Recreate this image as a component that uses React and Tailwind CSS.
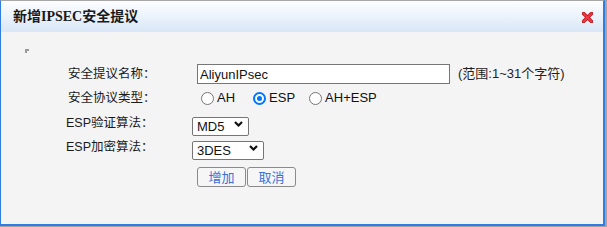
import { useState } from "react";

const sans = { fontFamily: '"Liberation Sans", "Noto Sans CJK SC", sans-serif' };

function Radio({ label, checked, onClick, className }) {
  return (
    <label className={"flex items-center cursor-pointer " + className} onClick={onClick}>
      {checked ? (
        <span className="w-[13px] h-[13px] rounded-full border-2 border-[#0075ff] bg-white flex items-center justify-center">
          <span className="w-[5px] h-[5px] rounded-full bg-[#0075ff]" />
        </span>
      ) : (
        <span className="w-[13px] h-[13px] rounded-full border border-[#767676] bg-white" />
      )}
      <span className="ml-[3px] text-[13px] text-[#111]">{label}</span>
    </label>
  );
}

function Select({ value, options, width }) {
  return (
    <div className={"relative h-[19px] " + width}>
      <select
        defaultValue={value}
        className="appearance-none w-full h-full border border-[#767676] rounded-[2px] bg-white pl-[4px] text-[13px] leading-[17px] text-[#111] outline-none"
      >
        {options.map((o) => (
          <option key={o}>{o}</option>
        ))}
      </select>
      <svg
        className="absolute right-[6px] top-[7px] pointer-events-none"
        width="9"
        height="6"
        viewBox="0 0 9 6"
      >
        <path d="M1 1 L4.5 4.5 L8 1" fill="none" stroke="#111" strokeWidth="2.2" />
      </svg>
    </div>
  );
}

export default function App() {
  const [proto, setProto] = useState("ESP");
  const [name, setName] = useState("AliyunIPsec");

  return (
    <div className="w-[607px] h-[227px] bg-[#a3a3a3] overflow-hidden" style={sans}>
      <div className="w-[605px] h-[226px] flex flex-col border-t border-t-[#a8a8a8] border-l border-r-2 border-b-2 border-[#2f7de3]">
        {/* title bar */}
        <div className="h-[31px] shrink-0 flex items-center justify-between bg-gradient-to-b from-[#fdfeff] to-[#d9e7f7] pl-[12px] pr-[10px]">
          <span
            className="text-[14px] font-bold text-[#1a1a1a]"
            style={{ fontFamily: '"Liberation Serif", "Noto Sans CJK SC", serif' }}
          >
            新增IPSEC安全提议
          </span>
          <svg width="11" height="11" viewBox="0 0 11 11" className="mt-[2px]">
            <path d="M1.5 1.5 L9.5 9.5 M9.5 1.5 L1.5 9.5" stroke="#b3121c" strokeWidth="3.6" strokeLinecap="round" />
            <path d="M1.5 1.5 L9.5 9.5 M9.5 1.5 L1.5 9.5" stroke="#ee3a42" strokeWidth="2" strokeLinecap="round" />
          </svg>
        </div>

        {/* body */}
        <div className="flex-1 bg-[#f4f4f4] flex flex-col">
          <div className="ml-[24px] mt-[17px] w-[4px] h-[4px] border-l-2 border-t-2 border-[#9a9a9a]" />

          <div className="mt-[10px] h-[22px] flex items-center">
            <span className="ml-[67px] w-[129px] text-[12.5px] text-[#1a1a1a]">安全提议名称：</span>
            <input
              value={name}
              onChange={(e) => setName(e.target.value)}
              className="w-[253px] h-[20px] border border-[#767676] bg-white px-[2px] text-[13px] text-[#111] outline-none"
            />
            <span className="ml-[8px] text-[13px] text-[#222]">(范围:1~31个字符)</span>
          </div>

          <div className="h-[26px] flex items-center">
            <span className="ml-[67px] w-[133px] text-[12.5px] text-[#1a1a1a]">安全协议类型：</span>
            <Radio label="AH" checked={proto === "AH"} onClick={() => setProto("AH")} />
            <Radio label="ESP" checked={proto === "ESP"} onClick={() => setProto("ESP")} className="ml-[18px]" />
            <Radio label="AH+ESP" checked={proto === "AH+ESP"} onClick={() => setProto("AH+ESP")} className="ml-[14px]" />
          </div>

          <div className="h-[25px] flex items-center">
            <span className="ml-[65px] w-[126px] text-[12.5px] text-[#1a1a1a]">ESP验证算法：</span>
            <Select value="MD5" options={["MD5", "SHA1"]} width="w-[57px]" />
          </div>

          <div className="h-[22px] flex items-center">
            <span className="ml-[65px] w-[126px] text-[12.5px] text-[#1a1a1a]">ESP加密算法：</span>
            <Select value="3DES" options={["3DES", "DES", "AES"]} width="w-[72px]" />
          </div>

          <div className="mt-[9px] ml-[196px] flex gap-[1px]">
            <button className="w-[49px] h-[20px] border border-[#8a8a8a] rounded-[3px] bg-[#f6f6f6] text-[13px] text-[#3a70dc]">
              增加
            </button>
            <button className="w-[49px] h-[20px] border border-[#8a8a8a] rounded-[3px] bg-[#f6f6f6] text-[13px] text-[#3a70dc]">
              取消
            </button>
          </div>
        </div>
      </div>
    </div>
  );
}
